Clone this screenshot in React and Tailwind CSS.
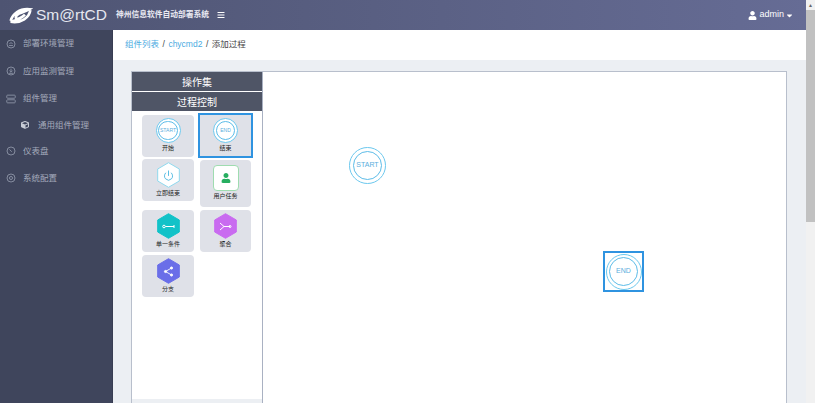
import React from "react";
import { Power } from "lucide-react";
import { FaUser, FaCaretDown, FaBars, FaCube } from "react-icons/fa";

const menu = [
  { label: "部署环境管理", icon: "deploy" },
  { label: "应用监测管理", icon: "monitor" },
  { label: "组件管理", icon: "server" },
];

function SideIcon({ type }) {
  if (type === "server") {
    return (
      <svg width="10" height="10" viewBox="0 0 13 13" fill="none" stroke="#8a91a4" strokeWidth="1.2">
        <rect x="1" y="1.5" width="11" height="4" rx="1" />
        <rect x="1" y="7.5" width="11" height="4" rx="1" />
      </svg>
    );
  }
  return (
    <svg width="10" height="10" viewBox="0 0 13 13" fill="none" stroke="#8a91a4" strokeWidth="1.2">
      <circle cx="6.5" cy="6.5" r="5.2" />
      {type === "deploy" && <path d="M4 8.5h5M4.5 6.5l2-2 2 2" />}
      {type === "monitor" && <path d="M6.5 3.5v4M4.5 6l2 2 2-2M4 9.5h5" />}
      {type === "gauge" && <path d="M4.5 4.5l3 3" />}
      {type === "config" && <circle cx="6.5" cy="6.5" r="2" />}
    </svg>
  );
}

function Hex({ fill, stroke, children }) {
  return (
    <div className="relative w-[23px] h-[26px] flex items-center justify-center">
      <svg className="absolute inset-0" width="23" height="26" viewBox="0 0 23 26">
        <path d="M11.5 0.7 L22.3 7 V19 L11.5 25.3 L0.7 19 V7 Z" fill={fill} stroke={stroke} />
      </svg>
      <div className="relative flex">{children}</div>
    </div>
  );
}

function Ring({ label, size = 25, text = "text-[5px]" }) {
  return (
    <div
      className="rounded-full border border-[#6cc8ee] flex items-center justify-center bg-white shrink-0"
      style={{ width: size, height: size }}
    >
      <div className={`w-[84%] h-[84%] rounded-full border-[1.5px] border-[#5cbce8] flex items-center justify-center text-[#5aaedd] ${text}`}>
        {label}
      </div>
    </div>
  );
}

function Tile({ label, children, className }) {
  return (
    <div className={`rounded bg-[#dfe1e8] flex flex-col items-center text-[#222] text-[6px] leading-[9px] ${className}`}>
      {children}
      <span className="mt-[1px]">{label}</span>
    </div>
  );
}

export default function App() {
  return (
    <div className="flex h-[403px] w-[815px] overflow-hidden font-['Liberation_Sans','Noto_Sans_CJK_SC',sans-serif]">
      <div className="flex-1 flex flex-col min-w-0">
        <header className="h-[30px] shrink-0 flex items-center bg-gradient-to-r from-[#4e5472] to-[#666c95] text-white">
          <svg className="ml-[8px]" width="25" height="19" viewBox="0 0 28 20" fill="none" stroke="#fff" strokeWidth="3">
            <path d="M3 16C5 8 13 2 24 3C21 5 18 6 15 7C11 8 8 11 9 13C11 15 16 12 19 9" />
            <path d="M25 4C24 12 15 19 3 17C7 16 11 15 14 14" />
          </svg>
          <span className="ml-[3px] w-[80px] text-[15.5px] text-[#e6e8f0]">Sm@rtCD</span>
          <span className="text-[7.75px] font-bold text-[#e8e9f2]">神州信息软件自动部署系统</span>
          <FaBars className="ml-[8px]" size={8} />
          <div className="ml-auto mr-[12px] flex items-center text-[9px]">
            <FaUser size={9} className="mr-[2px]" />
            admin
            <FaCaretDown size={9} className="ml-[1px]" />
          </div>
        </header>

        <div className="flex flex-1 min-h-0">
          <aside className="w-[113px] shrink-0 bg-[#3f455c] text-[#a4aabb] text-[8.5px] border-r border-[#383d52]">
            {menu.map((m) => (
              <div key={m.label} className="h-[27.5px] flex items-center pl-[6px] gap-[7px]">
                <SideIcon type={m.icon} />
                <span>{m.label}</span>
              </div>
            ))}
            <div className="h-[25px] flex items-center pl-[21px] gap-[9px]">
              <FaCube size={8} color="#c8ccd6" />
              <span>通用组件管理</span>
            </div>
            <div className="h-[27px] flex items-center pl-[6px] gap-[7px]">
              <SideIcon type="gauge" />
              <span>仪表盘</span>
            </div>
            <div className="h-[27px] flex items-center pl-[6px] gap-[7px]">
              <SideIcon type="config" />
              <span>系统配置</span>
            </div>
          </aside>

          <main className="flex-1 min-w-0 flex flex-col bg-[#eceff3]">
            <div className="h-[30px] shrink-0 bg-white flex items-center pl-[12px] pb-[1px] text-[8.5px] text-[#444]">
              <span className="text-[#4aabdf]">组件列表</span>
              <span className="mx-[3.5px]">/</span>
              <span className="text-[#4aabdf]">chycmd2</span>
              <span className="mx-[3.5px]">/</span>
              <span>添加过程</span>
            </div>

            <div className="flex-1 min-h-0 pt-[11px] pl-[18px] pr-[19px]">
              <div className="h-full flex bg-white border border-[#b8bfcc] border-b-0">
                <div className="w-[131px] shrink-0 flex flex-col border-r border-[#a9b1c2]">
                  <div className="h-[19px] pt-[1px] bg-[#4f5566] text-white text-[10px] flex items-center justify-center">操作集</div>
                  <div className="h-[19px] pt-[1px] mt-px bg-[#4f5566] text-white text-[10px] flex items-center justify-center">过程控制</div>
                  <div className="flex-1 grid grid-cols-[56px_56px] grid-rows-[46px_49px_46px_44px] content-start pl-[10px] pt-[2px]">
                    <Tile label="开始" className="w-[52px] h-[42px] mt-[2px] pt-[3px]">
                      <Ring label="START" />
                    </Tile>
                    <Tile label="结束" className="w-[55px] h-[45px] pt-[3px] border-2 border-[#2f93e0] rounded-none">
                      <Ring label="END" />
                    </Tile>
                    <Tile label="立即结束" className="w-[52px] h-[42px] pt-[3px]">
                      <Hex fill="#fff" stroke="#8fd9ee">
                        <Power size={11} stroke="#4bb8e0" strokeWidth={2} />
                      </Hex>
                    </Tile>
                    <Tile label="用户任务" className="w-[51px] h-[47px] mt-[1px] pt-[5px] ml-[2px]">
                      <div className="w-[26px] h-[26px] rounded-[4px] bg-white border border-[#9fdcb0] flex items-center justify-center">
                        <FaUser size={10} color="#27ae60" />
                      </div>
                    </Tile>
                    <Tile label="单一条件" className="w-[52px] h-[42px] mt-[2px] pt-[3px]">
                      <Hex fill="#12c2c8" stroke="#12c2c8">
                        <svg width="13" height="7" viewBox="0 0 13 7" fill="none" stroke="#fff" strokeWidth="1">
                          <circle cx="2" cy="3.5" r="1.3" />
                          <path d="M3.5 3.5H12M12 2v3" />
                        </svg>
                      </Hex>
                    </Tile>
                    <Tile label="聚合" className="w-[51px] h-[42px] mt-[2px] pt-[3px] ml-[2px]">
                      <Hex fill="#c96bf0" stroke="#c96bf0">
                        <svg width="13" height="9" viewBox="0 0 13 9" fill="none" stroke="#fff" strokeWidth="1">
                          <path d="M1 1l4 3.5L1 8M5 4.5h6" />
                          <circle cx="11" cy="4.5" r="1" />
                        </svg>
                      </Hex>
                    </Tile>
                    <Tile label="分支" className="w-[52px] h-[42px] mt-[1px] pt-[3px]">
                      <Hex fill="#6a6ee8" stroke="#6a6ee8">
                        <svg width="11" height="11" viewBox="0 0 11 11" fill="#fff" stroke="#fff" strokeWidth="0.9">
                          <path d="M2.5 5.5L8.5 2M2.5 5.5L8.5 9" fill="none" />
                          <circle cx="2.5" cy="5.5" r="1.1" />
                          <circle cx="8.5" cy="2" r="1.1" />
                          <circle cx="8.5" cy="9" r="1.1" />
                        </svg>
                      </Hex>
                    </Tile>
                  </div>
                  <div className="h-[4px] bg-[#eceff3]" />
                </div>

                <div className="flex-1 relative">
                  <div className="absolute left-[86px] top-[75px]">
                    <Ring label="START" size={37} text="text-[7px]" />
                  </div>
                  <div className="absolute left-[340px] top-[179px] w-[41px] h-[41px] border-2 border-[#2f93e0] flex items-center justify-center">
                    <Ring label="END" size={36} text="text-[7px]" />
                  </div>
                </div>
              </div>
            </div>
          </main>
        </div>
      </div>

      <div className="w-[9px] shrink-0 bg-[#f1f1f1] flex flex-col items-center">
        <div className="h-[10px] flex items-center text-[#666] text-[5px] leading-none">▲</div>
        <div className="w-full h-[212px] bg-[#c1c1c1]" />
      </div>
    </div>
  );
}
